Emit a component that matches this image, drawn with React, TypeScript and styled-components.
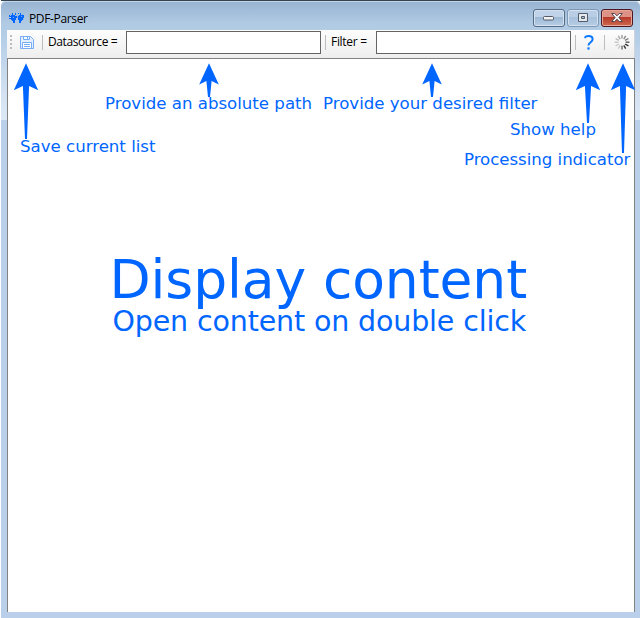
import React from "react";
import styled, { createGlobalStyle } from "styled-components";

const BLUE = "#0066ff";

const GlobalStyle = createGlobalStyle`
  * { box-sizing: border-box; }
  body { margin: 0; background: #fff; overflow: hidden; }
`;

const Desktop = styled.div`
  width: 640px;
  height: 618px;
  padding: 1px 0 0 1px;
  background: linear-gradient(90deg, #fff 1px, transparent 1px), linear-gradient(#35444f 1px, #fff 1px);
`;

const Window = styled.main`
  display: flex;
  flex-direction: column;
  height: 617px;
  padding: 0 5px 6px 6px;
  border-radius: 5px 5px 0 0;
  background: linear-gradient(#98b3d1 0, #b0cae4 22px, #b6cfe8 40px, #d4e2f2 95px, #dce8f5 119px, #bad0ea 119px);
  box-shadow: inset 0 1px #c3d5e8;
`;

const TitleBar = styled.header`
  display: flex;
  height: 29px;
  padding: 8px 2px 0 2px;
  font: 12px/18px "Open Sans", sans-serif;
  color: #000;
`;

const Title = styled.h1`
  margin: 1px auto 0 4px;
  font: inherit;
  letter-spacing: -0.35px;
`;

const WindowButtons = styled.div`
  display: flex;
  gap: 2px;
`;

const WindowButton = styled.button<{ $kind: "normal" | "dim" | "close" }>`
  display: flex;
  align-items: center;
  justify-content: center;
  width: 32px;
  height: 18px;
  padding: 0;
  border: 1px solid ${(p) => (p.$kind === "close" ? "#4d1620" : p.$kind === "dim" ? "#7f98b5" : "#566b84")};
  border-radius: 3px;
  box-shadow: inset 0 0 0 1px ${(p) => (p.$kind === "close" ? "#e6a79b" : "#d3e1f0")};
  background: ${(p) =>
    p.$kind === "close"
      ? "linear-gradient(#dd9285 0 45%, #b8392a 46%, #cd6a50)"
      : p.$kind === "dim"
        ? "linear-gradient(#b9cee5 0 45%, #a7c0db 46%, #b6cde5)"
        : "linear-gradient(#c0d3e8 0 45%, #9db7d3 46%, #b8cfe8)"};
`;

const ToolBar = styled.div`
  display: flex;
  align-items: center;
  height: 28px;
  padding: 0 0 3px 3px;
  border-right: 1px solid #d0d4da;
  background: linear-gradient(#fdfdfd, #eeeeee);
  font: 12px/16px "Open Sans", sans-serif;
  color: #000;
`;

const Grip = styled.span`
  width: 2px;
  height: 15px;
  background: repeating-linear-gradient(#bcbcbc 0 2px, transparent 2px 4px);
`;

const ToolButton = styled.button<{ $left: number }>`
  display: flex;
  width: 16px;
  height: 16px;
  margin: 0 0 0 ${(p) => p.$left}px;
  padding: 0;
  border: 0;
  background: none;
`;

const Divider = styled.span<{ $left: number }>`
  width: 1px;
  height: 15px;
  margin-left: ${(p) => p.$left}px;
  background: #bdbdbd;
`;

const FieldLabel = styled.label<{ $width: number; $spacing: number }>`
  display: flex;
  width: ${(p) => p.$width}px;
  padding: 0 0 1px 5px;
  letter-spacing: ${(p) => p.$spacing}px;
  white-space: nowrap;
`;

const Field = styled.input`
  width: 195px;
  height: 23px;
  margin: 0;
  padding: 0 3px;
  border: 1px solid #646464;
  border-radius: 0;
  background: #fff;
`;

const Content = styled.section`
  position: relative;
  flex: 1;
  border: 1px solid #828282;
  border-bottom: 0;
  background: #fff;
`;

const Arrows = styled.svg`
  position: absolute;
  left: -8px;
  top: -59px;
  fill: ${BLUE};
`;

const Note = styled.p<{ $x: number; $y: number; $size: number; $spacing: number }>`
  position: absolute;
  left: ${(p) => p.$x - 8}px;
  top: ${(p) => p.$y - 59}px;
  margin: 0;
  font: ${(p) => p.$size}px/1 "DejaVu Sans", Verdana, sans-serif;
  letter-spacing: ${(p) => p.$spacing}px;
  white-space: nowrap;
  color: ${BLUE};
`;

const Logo = () => (
  <svg width="16" height="16" viewBox="0 -1 16 16" fill={BLUE}>
    <path d="M2 5h4v1h1v4H6v1H3v-1H2zM10 5h4v5h-1v1h-3v-1H9V6h1z" />
    <path d="M0 5h1v1h1v1H0zM3 3h1v2H3zM6 3h1v2H6zM7 6h1v2H7zM11 3h1v2h-1zM9 3h1v1H9zM14 5h1v3h-1zM4 11h2v2H4zM10 11h2v2h-2zM0 8h2v1H0z" />
    <path fill="#7da9e6" d="M4 7h1v1H4zM12 6h1v1h-1zM1 4h1v1H1zM13 4h1v1h-1zM8 5h1v3H8zM14 9h1v1h-1z" />
  </svg>
);

const SaveIcon = () => (
  <svg width="16" height="16" viewBox="0 0 16 16" fill="none" stroke="#78acf5">
    <path fill="#e3eefe" d="M1.5 1.5h10l3 3v9h-13z" />
    <path fill="#fff" d="M4.5 1.5h6v3h-6zM3.5 7.5h9v6h-9z" />
    <path d="M8.5 2v2M5 9.5h6M5 11.5h6" />
  </svg>
);

const HelpIcon = () => (
  <svg width="16" height="16" viewBox="0 0 16 16" fill="none" stroke="#0a77ff" strokeWidth="2">
    <path d="M3.6 2.8Q5 1 7.5 1c2.7 0 4.1 1.2 4.1 3.2 0 3-4.1 3-4.1 6.3" />
    <path d="M7.5 12.3v2.3" strokeWidth="2.2" />
  </svg>
);

const Spinner = () => (
  <svg width="16" height="16" viewBox="-8 -7.2 16 16">
    {Array.from({ length: 12 }, (_, i) => (
      <path
        key={i}
        d="M0-3.6V-7.4"
        stroke="#222"
        strokeWidth="1.4"
        strokeOpacity={[0.45, 0.5, 0.6, 0.75, 0.95, 0.9, 0.65, 0.2, 0.2, 0.24, 0.3, 0.38][i]}
        transform={`rotate(${i * 30})`}
      />
    ))}
  </svg>
);

const ARROWS = [
  { x: 26, end: 139, wing: 12.2, barb: 90.3, notch: 3.1, neck: 86 },
  { x: 209, end: 97, wing: 9.8, barb: 84.5, notch: 2.6, neck: 81 },
  { x: 432, end: 97, wing: 9.8, barb: 84.5, notch: 2.6, neck: 81 },
  { x: 588, end: 123, wing: 12.2, barb: 90.3, notch: 3.1, neck: 86 },
  { x: 623, end: 153, wing: 12.2, barb: 90.3, notch: 3.1, neck: 86 },
];

const NOTES = [
  { text: "Save current list", x: 20, y: 139, size: 16.6, spacing: 0 },
  { text: "Provide an absolute path", x: 105, y: 96, size: 16.6, spacing: 0 },
  { text: "Provide your desired filter", x: 323, y: 96, size: 16.6, spacing: 0 },
  { text: "Show help", x: 510, y: 122, size: 16.6, spacing: 0 },
  { text: "Processing indicator", x: 464, y: 152, size: 16.6, spacing: -0.03 },
  { text: "Display content", x: 109.5, y: 253, size: 53.5, spacing: -0.1 },
  { text: "Open content on double click", x: 112.5, y: 307.5, size: 28.5, spacing: -0.15 },
];

export default function App() {
  return (
    <Desktop>
      <GlobalStyle />
      <Window>
        <TitleBar>
          <Logo />
          <Title>PDF-Parser</Title>
          <WindowButtons>
            <WindowButton $kind="normal" aria-label="Minimize">
              <svg width="12" height="6"><rect x=".5" y="1.5" width="10" height="3.5" rx="1" fill="#f4f4f4" stroke="#555b66" /></svg>
            </WindowButton>
            <WindowButton $kind="dim" aria-label="Maximize">
              <svg width="12" height="10"><path fill="#e4e9ef" stroke="#555b66" fillRule="evenodd" d="M1.5.5h9v8h-9zM4.5 3.5v2h3v-2z" /></svg>
            </WindowButton>
            <WindowButton $kind="close" aria-label="Close">
              <svg width="12" height="10"><path fill="#f5f5f5" stroke="#514650" d="M.7.5h3L6 2.8 8.3.5h3L7.9 4.6l3.4 3.9h-3L6 6.3 3.7 8.5h-3l3.4-3.9z" /></svg>
            </WindowButton>
          </WindowButtons>
        </TitleBar>
        <ToolBar>
          <Grip />
          <ToolButton $left={7} aria-label="Save"><SaveIcon /></ToolButton>
          <Divider $left={7} />
          <FieldLabel $width={83} $spacing={-0.4} htmlFor="source">Datasource =</FieldLabel>
          <Field id="source" />
          <Divider $left={4} />
          <FieldLabel $width={50} $spacing={-0.3} htmlFor="filter">Filter =</FieldLabel>
          <Field id="filter" />
          <Divider $left={4} />
          <ToolButton $left={5} aria-label="Help"><HelpIcon /></ToolButton>
          <Divider $left={7} />
          <ToolButton $left={9} aria-label="Processing"><Spinner /></ToolButton>
        </ToolBar>
        <Content>
          <Arrows width="640" height="170">
            {ARROWS.map(({ x, end, wing, barb, notch, neck }) => (
              <path
                key={x}
                d={`M${x} 63.2L${x + wing} ${barb}L${x + notch} ${neck}L${x + 1} ${end}H${x - 1}L${x - notch} ${neck}L${x - wing} ${barb}Z`}
              />
            ))}
          </Arrows>
          {NOTES.map((n) => (
            <Note key={n.text} $x={n.x} $y={n.y} $size={n.size} $spacing={n.spacing}>{n.text}</Note>
          ))}
        </Content>
      </Window>
    </Desktop>
  );
}
